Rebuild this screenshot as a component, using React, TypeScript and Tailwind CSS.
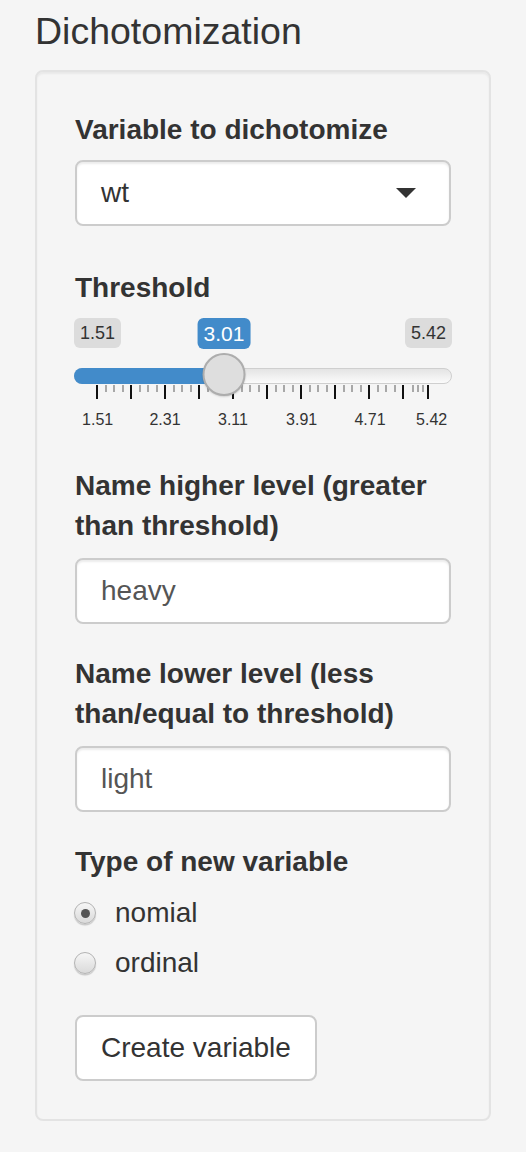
import React from "react";

const majorTicks = [22, 56, 90, 124, 158, 192, 226, 260, 294, 328, 353];
const minorTicks: number[] = (() => {
  const out: number[] = [];
  for (let i = 0; i < 9; i++) {
    const a = majorTicks[i];
    const b = majorTicks[i + 1];
    for (let k = 1; k <= 3; k++) out.push(a + ((b - a) * k) / 4);
  }
  out.push(338, 343, 348);
  return out;
})();
const gridLabels: { x: number; t: string }[] = [
  { x: 22.7, t: "1.51" },
  { x: 90, t: "2.31" },
  { x: 158, t: "3.11" },
  { x: 226.7, t: "3.91" },
  { x: 295, t: "4.71" },
  { x: 356.7, t: "5.42" },
];

function Slider() {
  const handleX = 149;
  return (
    <div className="relative mt-[10px] h-[118px] w-full">
      {/* min / max / single badges */}
      <div className="absolute left-[-1px] top-0 flex h-[30px] items-center rounded-[6px] bg-[rgba(0,0,0,0.1)] px-[6px] text-[18px] text-[#333]">
        1.51
      </div>
      <div className="absolute right-[-1px] top-0 flex h-[30px] items-center rounded-[6px] bg-[rgba(0,0,0,0.1)] px-[6px] text-[18px] text-[#333]">
        5.42
      </div>
      <div
        className="absolute top-0 flex h-[31px] -translate-x-1/2 items-center rounded-[6px] bg-[#428bca] px-[6px] text-[21px] text-white"
        style={{ left: handleX }}
      >
        3.01
      </div>
      {/* track */}
      <div className="absolute left-[-1px] right-[-1px] top-[50px] h-[16px] rounded-full border border-[#cfcfcf] bg-gradient-to-b from-[#e4e4e4] to-[#fbfbfb]" />
      <div
        className="absolute left-[-1px] top-[50px] h-[16px] rounded-l-full bg-[#428bca]"
        style={{ width: handleX + 1 }}
      />
      {/* ticks */}
      {minorTicks.map((x, i) => (
        <div
          key={"m" + i}
          className="absolute top-[67px] h-[7px] w-[2px] bg-[#a8a8a8]"
          style={{ left: x - 1 }}
        />
      ))}
      {majorTicks.map((x, i) => (
        <div
          key={"M" + i}
          className="absolute top-[67px] h-[14px] w-[2px] bg-[#111]"
          style={{ left: x - 1 }}
        />
      ))}
      {gridLabels.map((l) => (
        <div
          key={l.t}
          className="absolute top-[94px] -translate-x-1/2 text-[16px] leading-[16px] text-[#333]"
          style={{ left: l.x }}
        >
          {l.t}
        </div>
      ))}
      {/* handle */}
      <div
        className="absolute top-[35px] h-[43px] w-[43px] -translate-x-1/2 rounded-full border-2 border-[#adadad] bg-[#dedede] shadow-[0_1px_2px_rgba(0,0,0,0.15)]"
        style={{ left: handleX }}
      />
    </div>
  );
}

function Radio({ label, checked, className }: { label: string; checked?: boolean; className?: string }) {
  return (
    <div className={"flex h-[40px] items-center " + (className ?? "")}>
      <div className="ml-[-1px] flex h-[22px] w-[22px] items-center justify-center rounded-full border border-[#b3b3b3] bg-gradient-to-b from-[#f6f6f6] to-[#dadada] shadow-[0_1.5px_1px_rgba(0,0,0,0.18)]">
        {checked && <div className="h-[9px] w-[9px] rounded-full bg-[#555]" />}
      </div>
      <span className="ml-[19px] text-[28px] leading-[40px] text-[#333]">{label}</span>
    </div>
  );
}

export default function App() {
  return (
    <div
      className="min-h-screen bg-[#f5f5f5] pl-[35px] pt-[11px] text-[#333]"
      style={{ fontFamily: '"Liberation Sans", Arial, Helvetica, sans-serif' }}
    >
      <h3 className="text-[37.5px] font-normal leading-[40px] text-[#333]">Dichotomization</h3>
      <div className="mt-[19px] flex w-[456px] flex-col rounded-[8px] border-2 border-[#e3e3e3] bg-[#f5f5f5] p-[38px] shadow-[inset_0_2px_2px_rgba(0,0,0,0.05)]">
        <label className="text-[28px] font-bold leading-[40px]">Variable to dichotomize</label>
        <div className="mt-[10px] flex h-[66px] items-center justify-between rounded-[8px] border-2 border-[#cccccc] bg-white pl-[24px] pr-[33px] shadow-[inset_0_2px_2px_rgba(0,0,0,0.075)]">
          <span className="text-[28px] leading-[40px] text-[#333]">wt</span>
          <div className="h-0 w-0 border-l-[10px] border-r-[10px] border-t-[10px] border-l-transparent border-r-transparent border-t-[#333]" />
        </div>

        <label className="mt-[42px] text-[28px] font-bold leading-[40px]">Threshold</label>
        <Slider />

        <label className="mt-[30px] text-[28px] font-bold leading-[40px]">
          Name higher level (greater than threshold)
        </label>
        <div className="mt-[12px] flex h-[66px] items-center rounded-[8px] border-2 border-[#cccccc] bg-white pl-[24px] shadow-[inset_0_2px_2px_rgba(0,0,0,0.075)]">
          <span className="text-[28px] leading-[40px] text-[#555]">heavy</span>
        </div>

        <label className="mt-[30px] text-[28px] font-bold leading-[40px]">
          Name lower level (less than/equal to threshold)
        </label>
        <div className="mt-[12px] flex h-[66px] items-center rounded-[8px] border-2 border-[#cccccc] bg-white pl-[24px] shadow-[inset_0_2px_2px_rgba(0,0,0,0.075)]">
          <span className="text-[28px] leading-[40px] text-[#555]">light</span>
        </div>

        <label className="mt-[30px] text-[28px] font-bold leading-[40px]">Type of new variable</label>
        <Radio label="nomial" checked className="mt-[11px]" />
        <Radio label="ordinal" className="mt-[10px]" />

        <div className="mt-[32px] flex">
          <div className="flex h-[66px] items-center rounded-[8px] border-2 border-[#cccccc] bg-white px-[24px] text-[28px] leading-[40px] text-[#333]">
            Create variable
          </div>
        </div>
      </div>
    </div>
  );
}
